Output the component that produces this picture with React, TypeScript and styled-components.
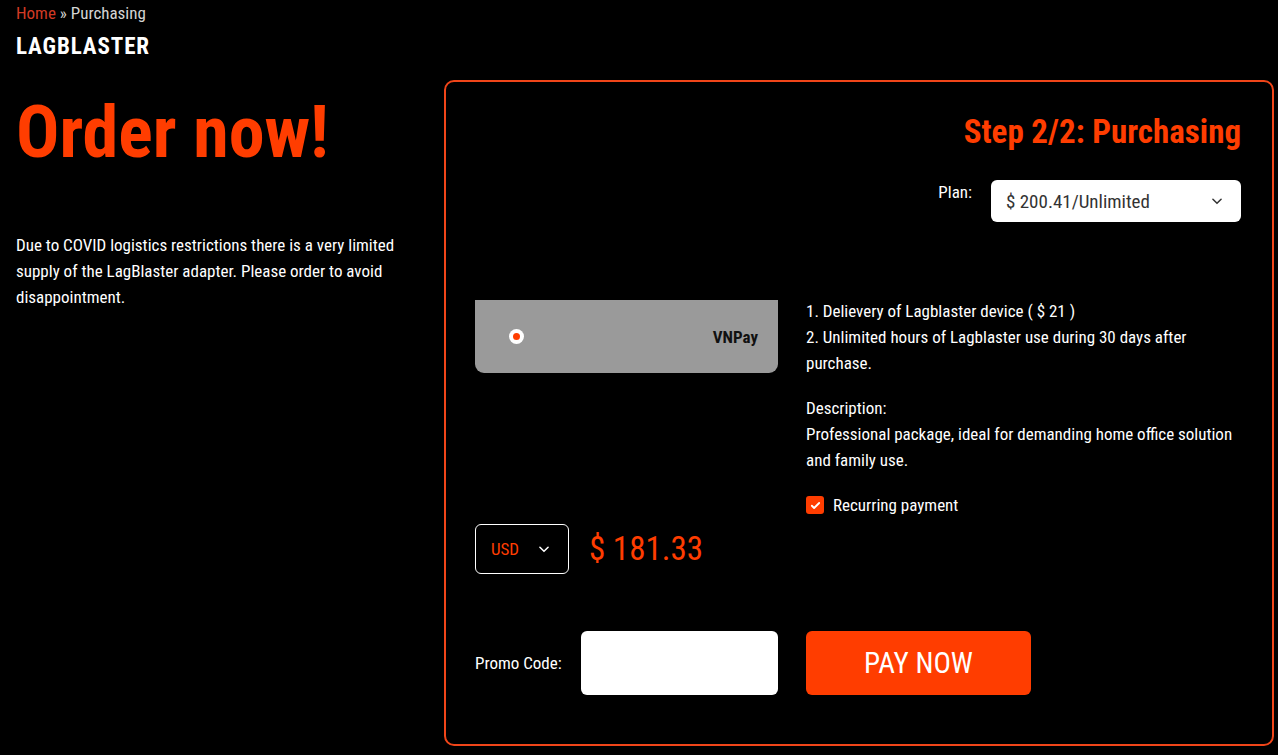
import React from 'react'
import styled, {createGlobalStyle} from 'styled-components'

const ORANGE = '#ff3d00'
const FONT = '"Roboto Condensed", "Liberation Sans Narrow", "DejaVu Sans Condensed", Roboto, sans-serif'

const GlobalStyle = createGlobalStyle`
  html, body {
    margin: 0;
    padding: 0;
    background: #000;
    color: #fff;
    font-family: ${FONT};
  }
  * { box-sizing: border-box; }
`

const Page = styled.div`
  width: 1278px;
  height: 755px;
  overflow: hidden;
  background: #000;
`

const Header = styled.header`
  padding: 3px 16px 0;
`

const Crumbs = styled.div`
  font-size: 17px;
  line-height: 20px;
  color: #d4d4d4;

  a {
    color: #d23a24;
    text-decoration: none;
  }
`

const Brand = styled.div`
  margin-top: 12px;
  font-size: 23px;
  line-height: 24px;
  font-weight: 700;
  letter-spacing: 0.9px;
  color: #fff;
`

const Main = styled.main`
  display: flex;
  margin-top: 21px;
  padding-right: 4px;
`

const Intro = styled.section`
  width: 444px;
  padding: 0 40px 0 16px;
`

const Title = styled.h1`
  margin: 13px 0 0;
  font-size: 72px;
  line-height: 80px;
  font-weight: 700;
  color: ${ORANGE};
`

const Lead = styled.p`
  margin: 59px 0 0;
  font-size: 17px;
  line-height: 26px;
  color: #fff;
`

const Panel = styled.section`
  flex: 1;
  height: 666px;
  border: 2px solid #f04519;
  border-radius: 10px;
  padding: 28px 31px 0 29px;
`

const StepTitle = styled.h2`
  margin: 0;
  text-align: right;
  font-size: 33px;
  line-height: 44px;
  font-weight: 700;
  color: ${ORANGE};
`

const PlanRow = styled.div`
  display: flex;
  justify-content: flex-end;
  align-items: flex-start;
  gap: 19px;
  margin-top: 26px;
`

const FieldLabel = styled.label`
  font-size: 17px;
  line-height: 24px;
  color: #fff;
  white-space: nowrap;
`

const PlanSelect = styled.div`
  width: 250px;
  height: 42px;
  background: #fff;
  border-radius: 6px;
  display: flex;
  align-items: center;
  justify-content: space-between;
  padding: 0 17px 0 15px;
  color: #333;
  font-size: 19px;
`

const Grid = styled.div`
  display: grid;
  grid-template-columns: 303px 1fr;
  column-gap: 28px;
  row-gap: 57px;
  margin-top: 76px;
`

const LeftCol = styled.div`
  display: flex;
  flex-direction: column;
  padding-top: 2px;
`

const PayCard = styled.div`
  height: 73px;
  background: #9a9a9a;
  border-radius: 0 0 9px 9px;
  display: flex;
  align-items: center;
  justify-content: space-between;
  padding: 0 20px 0 34px;
`

const Radio = styled.span`
  width: 15px;
  height: 15px;
  border-radius: 50%;
  background: #fff;
  display: flex;
  align-items: center;
  justify-content: center;

  &::after {
    content: '';
    width: 7px;
    height: 7px;
    border-radius: 50%;
    background: ${ORANGE};
  }
`

const CardName = styled.span`
  font-size: 17px;
  font-weight: 700;
  color: #111;
`

const PriceRow = styled.div`
  display: flex;
  align-items: center;
  gap: 20px;
  margin-top: 151px;
`

const CurrencySelect = styled.div`
  width: 94px;
  height: 50px;
  border: 1px solid #fff;
  border-radius: 6px;
  display: flex;
  align-items: center;
  justify-content: space-between;
  padding: 0 17px 0 15px;
  color: ${ORANGE};
  font-size: 17px;
`

const Price = styled.div`
  font-size: 33px;
  color: ${ORANGE};
  line-height: 40px;
`

const Details = styled.div`
  font-size: 17px;
  line-height: 26px;
  color: #fff;

  p {
    margin: 0 0 19px;
  }
`

const Check = styled.label`
  display: flex;
  align-items: center;
  gap: 9px;
`

const CheckBox = styled.span`
  width: 18px;
  height: 18px;
  border-radius: 3px;
  background: ${ORANGE};
  display: flex;
  align-items: center;
  justify-content: center;
`

const PromoRow = styled.div`
  display: flex;
  align-items: center;
  gap: 19px;
`

const PromoInput = styled.div`
  flex: 1;
  height: 64px;
  background: #fff;
  border-radius: 6px;
`

const PayButton = styled.button`
  width: 225px;
  height: 64px;
  border: none;
  border-radius: 6px;
  background: ${ORANGE};
  color: #fff;
  font-family: ${FONT};
  font-size: 29px;
  cursor: pointer;
`

function Chevron({color}: {color: string}) {
  return (
    <svg width="14" height="14" viewBox="0 0 24 24" fill="none" stroke={color} strokeWidth="2.6" strokeLinecap="round" strokeLinejoin="round">
      <path d="M5 9l7 7 7-7" />
    </svg>
  )
}

export default function App() {
  return (
    <Page>
      <GlobalStyle />
      <Header>
        <Crumbs>
          <a href="#">Home</a> » Purchasing
        </Crumbs>
        <Brand>LAGBLASTER</Brand>
      </Header>

      <Main>
        <Intro>
          <Title>Order now!</Title>
          <Lead>
            Due to COVID logistics restrictions there is a very limited supply of the LagBlaster adapter. Please order
            to avoid disappointment.
          </Lead>
        </Intro>

        <Panel>
          <StepTitle>Step 2/2: Purchasing</StepTitle>

          <PlanRow>
            <FieldLabel>Plan:</FieldLabel>
            <PlanSelect>
              <span>$ 200.41/Unlimited</span>
              <Chevron color="#333" />
            </PlanSelect>
          </PlanRow>

          <Grid>
            <LeftCol>
              <PayCard>
                <Radio />
                <CardName>VNPay</CardName>
              </PayCard>
              <PriceRow>
                <CurrencySelect>
                  <span>USD</span>
                  <Chevron color="#fff" />
                </CurrencySelect>
                <Price>$ 181.33</Price>
              </PriceRow>
            </LeftCol>

            <Details>
              <p>
                1. Delievery of Lagblaster device ( $ 21 )
                <br />
                2. Unlimited hours of Lagblaster use during 30 days after purchase.
              </p>
              <p>
                Description:
                <br />
                Professional package, ideal for demanding home office solution and family use.
              </p>
              <Check>
                <CheckBox>
                  <svg width="11" height="11" viewBox="0 0 24 24" fill="none" stroke="#fff" strokeWidth="4" strokeLinecap="round" strokeLinejoin="round">
                    <path d="M4 12.5l5 5L20 6.5" />
                  </svg>
                </CheckBox>
                Recurring payment
              </Check>
            </Details>

            <PromoRow>
              <FieldLabel>Promo Code:</FieldLabel>
              <PromoInput />
            </PromoRow>

            <div>
              <PayButton>PAY NOW</PayButton>
            </div>
          </Grid>
        </Panel>
      </Main>
    </Page>
  )
}
